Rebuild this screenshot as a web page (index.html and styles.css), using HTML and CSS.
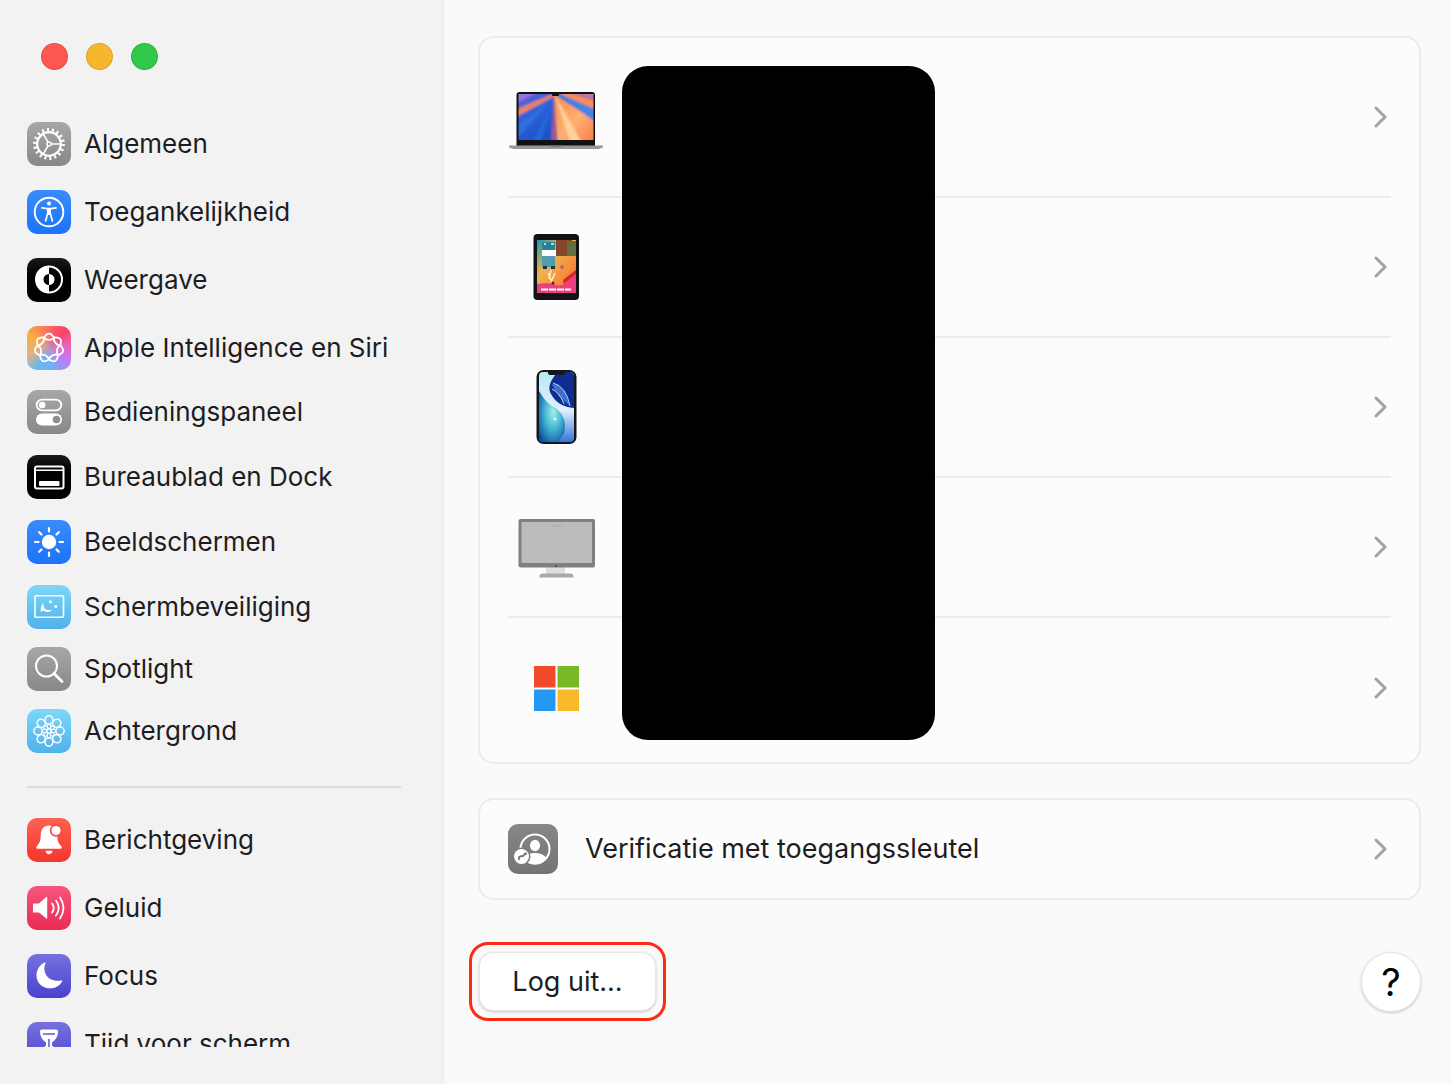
FILE: index.html
```html
<!DOCTYPE html>
<html lang="nl">
<head>
    <meta charset="UTF-8">
    <meta name="viewport" content="width=device-width, initial-scale=1.0">
    <title>Systeeminstellingen</title>
    <link rel="stylesheet" href="styles.css">
</head>
<body>
    <div class="window">
        <aside class="sidebar">
            <div class="window-buttons">
                <button type="button" class="dot close" aria-label="Sluit"></button>
                <button type="button" class="dot minimize" aria-label="Minimaliseer"></button>
                <button type="button" class="dot zoom" aria-label="Vergroot"></button>
            </div>

            <nav class="menu">
                <div class="menu-group wide">
                    <a href="#" class="menu-item">
                        <svg class="icon gray" viewBox="0 0 44 44" fill="none" stroke="#fff">
                            <circle cx="22" cy="22" r="14.2" stroke-width="3.4" stroke-dasharray="2 2.957"/>
                            <circle cx="22" cy="22" r="11.8" stroke-width="2.2"/>
                            <circle cx="22" cy="22" r="2" stroke-width="1.5"/>
                            <path d="M24 22h10M21 20.2l-5-8.6M21 23.8l-5 8.6" stroke-width="1.6"/>
                        </svg>
                        <span>Algemeen</span>
                    </a>
                    <a href="#" class="menu-item">
                        <svg class="icon blue" viewBox="0 0 44 44" fill="none" stroke="#fff">
                            <circle cx="22" cy="22" r="14.3" stroke-width="2"/>
                            <circle cx="22" cy="13.6" r="2" fill="#fff" stroke="none"/>
                            <path d="M15 17.8l5 .9h4l5-.9" stroke-width="1.7" stroke-linecap="round"/>
                            <path d="M20 18h4v7h-4z" fill="#fff" stroke="none"/>
                            <path d="M20.8 23l-2.2 8M23.2 23l2.2 8" stroke-width="1.7" stroke-linecap="round"/>
                        </svg>
                        <span>Toegankelijkheid</span>
                    </a>
                    <a href="#" class="menu-item">
                        <svg class="icon black" viewBox="0 0 44 44">
                            <circle cx="22" cy="21.5" r="13" fill="none" stroke="#fff" stroke-width="2"/>
                            <path d="M22 8.5a13 13 0 0 0 0 26z" fill="#fff"/>
                            <path d="M22 16a5.5 5.5 0 0 0 0 11z" fill="#080808"/>
                            <path d="M22 16a5.5 5.5 0 0 1 0 11z" fill="#fff"/>
                        </svg>
                        <span>Weergave</span>
                    </a>
                    <a href="#" class="menu-item">
                        <svg class="icon siri" viewBox="0 0 44 44" fill="none" stroke="#fff" stroke-width="1.8">
                            <g id="loop">
                                <path d="M17 11.6C19 8.5 20 7.6 22 7.6S25 8.5 27 11.6"/>
                                <path d="M17 11.6C18.5 13.4 20 13.8 22 13.8S25.5 13.4 27 11.6"/>
                            </g>
                            <use href="#loop" transform="rotate(51.43 22 22)"/>
                            <use href="#loop" transform="rotate(102.86 22 22)"/>
                            <use href="#loop" transform="rotate(154.29 22 22)"/>
                            <use href="#loop" transform="rotate(205.71 22 22)"/>
                            <use href="#loop" transform="rotate(257.14 22 22)"/>
                            <use href="#loop" transform="rotate(308.57 22 22)"/>
                        </svg>
                        <span>Apple Intelligence en Siri</span>
                    </a>
                </div>

                <div class="menu-group">
                    <a href="#" class="menu-item">
                        <svg class="icon gray" viewBox="0 0 44 44">
                            <rect x="9.7" y="9.7" width="24.6" height="10.6" rx="5.3" fill="none" stroke="#fff" stroke-width="1.8"/>
                            <circle cx="15.2" cy="15" r="3.3" fill="#fff"/>
                            <rect x="9" y="23.5" width="26" height="12" rx="6" fill="#fff"/>
                            <circle cx="29.5" cy="29.5" r="3.8" fill="#8e8e90"/>
                        </svg>
                        <span>Bedieningspaneel</span>
                    </a>
                    <a href="#" class="menu-item">
                        <svg class="icon black" viewBox="0 0 44 44">
                            <rect x="8" y="11.5" width="28.5" height="22" rx="2" fill="none" stroke="#fff" stroke-width="2"/>
                            <path d="M9 15.2h27" stroke="#fff" stroke-width="1.5"/>
                            <rect x="12" y="26" width="20.5" height="5" rx="1" fill="#fff"/>
                        </svg>
                        <span>Bureaublad en Dock</span>
                    </a>
                    <a href="#" class="menu-item">
                        <svg class="icon blue" viewBox="0 0 44 44">
                            <circle cx="22" cy="22" r="7.2" fill="#fff"/>
                            <path d="M22 8v3.500M22 32.500V36M8 22h3.500M32.500 22H36M12.200 12.200l2.300 2.300M29.500 29.500l2.300 2.300M31.800 12.200l-2.300 2.300M14.500 29.500l-2.300 2.300" stroke="#fff" stroke-width="2.2" stroke-linecap="round"/>
                        </svg>
                        <span>Beeldschermen</span>
                    </a>
                    <a href="#" class="menu-item">
                        <svg class="icon sky" viewBox="0 0 44 44">
                            <rect x="8" y="10.8" width="28.5" height="21.5" rx="1" fill="none" stroke="#fff" stroke-width="1.6"/>
                            <path d="M16.500 18c-.8 5 2.500 8.500 8.500 6.500-3 4-6.500 2.500-8 1l-3.300 1.300c-.2-4 .6-7.200 2.800-8.800z" fill="#fff"/>
                            <circle cx="23.5" cy="16.8" r="1.6" fill="#fff"/>
                            <circle cx="28.8" cy="21.6" r="1.5" fill="#fff"/>
                        </svg>
                        <span>Schermbeveiliging</span>
                    </a>
                </div>

                <div class="menu-group tight">
                    <a href="#" class="menu-item">
                        <svg class="icon gray" viewBox="0 0 44 44" fill="none" stroke="#fff" stroke-linecap="round">
                            <circle cx="19.5" cy="19" r="10.5" stroke-width="2"/>
                            <path d="M27 26.500l8 8" stroke-width="2.8"/>
                        </svg>
                        <span>Spotlight</span>
                    </a>
                    <a href="#" class="menu-item">
                        <svg class="icon sky" viewBox="0 0 44 44" fill="none" stroke="#fff" stroke-width="1.5">
                            <circle cx="22" cy="22" r="2.3"/>
                            <g id="petal">
                                <ellipse cx="22" cy="11" rx="3.9" ry="4.2"/>
                                <ellipse cx="22" cy="17.4" rx="1.7" ry="2.3" stroke-width="1"/>
                            </g>
                            <use href="#petal" transform="rotate(45 22 22)"/>
                            <use href="#petal" transform="rotate(90 22 22)"/>
                            <use href="#petal" transform="rotate(135 22 22)"/>
                            <use href="#petal" transform="rotate(180 22 22)"/>
                            <use href="#petal" transform="rotate(225 22 22)"/>
                            <use href="#petal" transform="rotate(270 22 22)"/>
                            <use href="#petal" transform="rotate(315 22 22)"/>
                        </svg>
                        <span>Achtergrond</span>
                    </a>
                </div>

                <hr class="divider">

                <div class="menu-group wide">
                    <a href="#" class="menu-item">
                        <svg class="icon red" viewBox="0 0 44 44">
                            <path d="M22 7.500c-5.500 0-8 4-8.200 9-.2 6-1 8.500-4.300 12-.7 1-.4 2.300 1 2.300h23c1.400 0 1.700-1.300 1-2.300-3.300-3.500-4.100-6-4.300-12C30 11.500 27.500 7.500 22 7.500z" fill="#fff"/>
                            <path d="M18.500 32.800h7c-.5 2.400-1.800 3.500-3.500 3.500s-3-1.100-3.500-3.500z" fill="#fff"/>
                            <circle cx="29" cy="12.5" r="6.2" fill="#fa4b3f"/>
                            <circle cx="29" cy="12.5" r="4.6" fill="#fff"/>
                        </svg>
                        <span>Berichtgeving</span>
                    </a>
                    <a href="#" class="menu-item">
                        <svg class="icon pink" viewBox="0 0 44 44">
                            <path d="M7 17.500h5l7.300-6.600c.4-.3.9 0 .9.500v20.700c0 .5-.5.800-.9.500L12 26.500H7c-.6 0-1-.4-1-1v-7c0-.6.400-1 1-1z" fill="#fff"/>
                            <path d="M25 17.500q3.500 4.500 0 9M29 14.500q5.500 7.500 0 15M33 11.500q7 10.500 0 21" fill="none" stroke="#fff" stroke-width="1.8" stroke-linecap="round"/>
                        </svg>
                        <span>Geluid</span>
                    </a>
                    <a href="#" class="menu-item">
                        <svg class="icon purple" viewBox="0 0 44 44">
                            <path d="M18.500 9.200c-4 9.500 3 19.300 15.300 17.200 1-.2 1.700.4 1.200 1.400-6.500 11-25.500 7.700-25.500-6.300 0-6 3.500-11 8-13 .8-.3 1.300 0 1 .7z" fill="#fff"/>
                        </svg>
                        <span>Focus</span>
                    </a>
                    <a href="#" class="menu-item">
                        <svg class="icon purple" viewBox="0 0 44 44">
                            <path d="M15 7.500h14c1.300 0 2 .8 2 2 0 5-2.500 8.500-6 11v3c3.500 2.500 6 6 6 11 0 1.200-.7 2-2 2H15c-1.300 0-2-.8-2-2 0-5 2.500-8.500 6-11v-3c-3.500-2.500-6-6-6-11 0-1.200.7-2 2-2z" fill="#fff"/>
                            <path d="M16 12h12M22 17v8" stroke="#5d56d2" stroke-width="1.5"/>
                        </svg>
                        <span>Tijd voor scherm</span>
                    </a>
                </div>
            </nav>
        </aside>

        <main class="content">
            <section class="card devices">
                <a href="#" class="device" aria-label="MacBook">
                    <svg class="device-icon" viewBox="0 -3 96 80">
                        <defs>
                            <linearGradient id="macSky" x1="0" y1="0" x2="1" y2="1">
                                <stop offset="0" stop-color="#7c62d8"/>
                                <stop offset=".35" stop-color="#2c5fd8"/>
                                <stop offset="1" stop-color="#0b3fb4"/>
                            </linearGradient>
                            <linearGradient id="macRay" x1="0" y1="0" x2="1" y2="1">
                                <stop offset="0" stop-color="#ff8a4a"/>
                                <stop offset=".5" stop-color="#ffb070"/>
                                <stop offset="1" stop-color="#f9703f"/>
                            </linearGradient>
                            <filter id="soft"><feGaussianBlur stdDeviation="1.3"/></filter>
                            <clipPath id="macScreen"><rect x="10.5" y="14" width="75" height="46"/></clipPath>
                        </defs>
                        <path d="M8.500 15q0-3 3-3h72.500q3 0 3 3V66h-78.500z" fill="#111"/>
                        <g clip-path="url(#macScreen)">
                            <g filter="url(#soft)">
                                <rect x="4" y="8" width="88" height="58" fill="url(#macSky)"/>
                                <path d="M47 13L4 31v8L49 15z" fill="#f0825a"/>
                                <path d="M44 19L10 57V45z" fill="#2f70e0"/>
                                <path d="M46 18L24 64h8z" fill="#2467dc"/>
                                <path d="M46 15l-3 51h12z" fill="#9c5a90"/>
                                <path d="M46 14l4 52h42V44z" fill="url(#macRay)"/>
                                <path d="M47 15l16 50h12z" fill="#ffd29b"/>
                                <path d="M50 14l42 32V25z" fill="#4a83e2"/>
                                <path d="M48 12l44 19v-9L60 12z" fill="#fb8d55"/>
                                <path d="M4 8h34L4 25z" fill="#9675d8"/>
                                <path d="M62 12h28v9z" fill="#c576a5"/>
                            </g>
                        </g>
                        <rect x="44" y="13" width="7" height="3" rx="1" fill="#111"/>
                        <path d="M1 65.500h94v1.500q-2 2-7 2H8q-5 0-7-2z" fill="#96979b"/>
                        <path d="M41 65.500h14l-2 1.500H43z" fill="#77787b"/>
                    </svg>
                    <svg class="chevron" viewBox="0 0 14 22"><path d="M2 2l9 9-9 9"/></svg>
                </a>
                <a href="#" class="device" aria-label="iPad">
                    <svg class="device-icon" viewBox="0 0 96 80">
                        <defs>
                            <linearGradient id="padBg" x1="0" y1="0" x2="1" y2="1">
                                <stop offset="0" stop-color="#1795a8"/>
                                <stop offset=".35" stop-color="#efb34e"/>
                                <stop offset=".7" stop-color="#f88a3c"/>
                                <stop offset="1" stop-color="#e43b78"/>
                            </linearGradient>
                        </defs>
                        <rect x="25.5" y="7" width="45.5" height="66" rx="4" fill="#111316"/>
                        <rect x="29" y="13" width="39" height="53" fill="url(#padBg)"/>
                        <path d="M29 57q12-2 20 1t19-13v21H29z" fill="#ec3f80"/>
                        <path d="M56 57l12-10v-4L55 53z" fill="#d9222e"/>
                        <rect x="48" y="13" width="16" height="16" fill="#87452c"/>
                        <rect x="59" y="14" width="9" height="15" fill="#60713f"/>
                        <rect x="34" y="15" width="13" height="8" fill="#277f98"/>
                        <rect x="34" y="23" width="14" height="6" fill="#fff"/>
                        <rect x="34" y="29" width="13" height="11" fill="#4f9dae"/>
                        <path d="M35 39h4v3h-4zM43 39h4v3h-4z" fill="#1e3540"/>
                        <path d="M36 17h2M43 17h3M40 46l3 7M43 43l-2 9M47 46l-4 9" stroke="#fff2c8" stroke-width="1.5"/>
                        <circle cx="54" cy="40" r="2" fill="#b66a69"/>
                        <circle cx="45" cy="56" r="1.5" fill="#442c32"/>
                        <path d="M33 62.500h30" stroke="#fff" stroke-width="2" stroke-dasharray="7 1"/>
                    </svg>
                    <svg class="chevron" viewBox="0 0 14 22"><path d="M2 2l9 9-9 9"/></svg>
                </a>
                <a href="#" class="device" aria-label="iPhone">
                    <svg class="device-icon" viewBox="0 0 96 80">
                        <defs>
                            <linearGradient id="phoneBg" x1="0" y1="0" x2="0" y2="1">
                                <stop offset="0" stop-color="#b9e8f2"/>
                                <stop offset=".55" stop-color="#e1efff"/>
                                <stop offset="1" stop-color="#3675d7"/>
                            </linearGradient>
                            <radialGradient id="phoneOrb" cx=".55" cy=".4" r=".7">
                                <stop offset="0" stop-color="#9ff0e0"/>
                                <stop offset=".45" stop-color="#48b8d4"/>
                                <stop offset="1" stop-color="#0649a3"/>
                            </radialGradient>
                            <clipPath id="phoneScreen"><rect x="31" y="5" width="35" height="70" rx="4"/></clipPath>
                        </defs>
                        <rect x="28.5" y="3" width="40" height="74" rx="7" fill="#15171c"/>
                        <g clip-path="url(#phoneScreen)">
                            <rect x="31" y="5" width="35" height="70" fill="url(#phoneBg)"/>
                            <path d="M31 24q8 14 17 17 12 10 8 25l-7 11H31z" fill="url(#phoneOrb)"/>
                            <path d="M48 7q-10 12-5 20 7 13 23 14V5H50z" fill="#102b91"/>
                            <path d="M44 17q13 0 17 21-13-9-17-21z" fill="#3f6fd0"/>
                            <path d="M45 16q13 3 17 23M44 22q8 4 12 15" fill="none" stroke="#b4d4fa" stroke-width="1"/>
                        </g>
                        <path d="M40 4h17v2q0 2-3 2H43q-3 0-3-2z" fill="#15171c"/>
                        <circle cx="47" cy="52" r="1.5" fill="#dcfff2"/>
                    </svg>
                    <svg class="chevron" viewBox="0 0 14 22"><path d="M2 2l9 9-9 9"/></svg>
                </a>
                <a href="#" class="device" aria-label="Beeldscherm">
                    <svg class="device-icon" viewBox="0 0 96 80">
                        <path d="M38 60h19v8H38z" fill="#dedede"/>
                        <path d="M31.500 69.500q0-3 3-3h28q3 0 3 3v1h-34z" fill="#aaa"/>
                        <rect x="10.5" y="12" width="76.500" height="48.5" rx="2" fill="#808080"/>
                        <rect x="13.500" y="15" width="70.500" height="41" fill="#bcbcbc"/>
                        <circle cx="48" cy="59" r="1" fill="#444"/>
                        <path d="M15 18.500h1.500M43 19h11" stroke="#aaa" stroke-width="1"/>
                    </svg>
                    <svg class="chevron" viewBox="0 0 14 22"><path d="M2 2l9 9-9 9"/></svg>
                </a>
                <a href="#" class="device" aria-label="Windows">
                    <svg class="device-icon" viewBox="0 0 96 80">
                        <rect x="26" y="18" width="21.5" height="21.5" fill="#f04a2a"/>
                        <rect x="49.5" y="18" width="21.5" height="21.5" fill="#79b928"/>
                        <rect x="26" y="41.5" width="21.5" height="21.5" fill="#2498f2"/>
                        <rect x="49.5" y="41.5" width="21.5" height="21.5" fill="#f9b928"/>
                    </svg>
                    <svg class="chevron" viewBox="0 0 14 22"><path d="M2 2l9 9-9 9"/></svg>
                </a>
                <div class="redacted"></div>
            </section>

            <a href="#" class="card passkey">
                <svg class="passkey-icon" viewBox="0 0 50 50">
                    <circle cx="27" cy="25" r="14.5" fill="none" stroke="#fff" stroke-width="2"/>
                    <ellipse cx="27" cy="21.5" rx="5" ry="5.8" fill="#fff"/>
                    <path d="M15.500 34q4-5 11.500-5t11.500 5q-4 6.500-11.500 6.500T15.500 34z" fill="#fff"/>
                    <circle cx="13.5" cy="32.5" r="9" fill="#7c7c7c"/>
                    <circle cx="13.5" cy="32.5" r="7.5" fill="#fff"/>
                    <path d="M11 36v-3q2-1 4-1l3-3" fill="none" stroke="#777" stroke-width="1.8"/>
                    <circle cx="17.5" cy="29.8" r="1.3" fill="#777"/>
                </svg>
                <span class="passkey-label">Verificatie met toegangssleutel</span>
                <svg class="chevron" viewBox="0 0 14 22"><path d="M2 2l9 9-9 9"/></svg>
            </a>

            <div class="actions">
                <div class="highlight">
                    <button type="button" class="logout-button">Log uit...</button>
                </div>
                <button type="button" class="help-button">?</button>
            </div>
        </main>
    </div>
</body>
</html>
```
FILE: styles.css
```css
* {
    box-sizing: border-box;
}
body {
    font-family: Inter, "Liberation Sans", sans-serif;
    font-size: 26px;
    line-height: 32px;
    color: #1d1d1f;
    background-color: #fafafa;
    margin: 0;
}
a {
    color: inherit;
    text-decoration: none;
}
button {
    font-family: inherit;
    color: inherit;
    padding: 0;
    cursor: pointer;
}
.window {
    display: flex;
    height: 100vh;
    overflow: hidden;
}
.sidebar {
    display: flex;
    flex-direction: column;
    flex: 0 0 444px;
    padding: 43px 42px 37px 27px;
    background-color: #f2f2f2;
    border-right: 1px solid #ebebeb;
}
.window-buttons {
    display: flex;
    gap: 18px;
    padding-left: 14px;
    margin-bottom: 52px;
}
.dot {
    width: 27px;
    height: 27px;
    border: 1px solid rgba(0, 0, 0, 0.1);
    border-radius: 50%;
}
.close {
    background-color: #fe5751;
}
.minimize {
    background-color: #f8b62f;
}
.zoom {
    background-color: #31c748;
}

/* menu */
.menu {
    flex: 1;
    min-height: 0;
    overflow: hidden;
}
.menu-group {
    display: flex;
    flex-direction: column;
    gap: 21px;
    margin-bottom: 18px;
}
.menu-group.wide {
    gap: 24px;
    margin-bottom: 20px;
}
.menu-group.tight {
    gap: 18px;
    margin-bottom: 0;
}
.menu-item {
    display: flex;
    align-items: center;
    gap: 13px;
    white-space: nowrap;
}
.icon {
    flex: none;
    width: 44px;
    height: 44px;
    border-radius: 10px;
}
.gray {
    background: linear-gradient(#a7a7a9, #88888a);
}
.blue {
    background: linear-gradient(#3a8bfb, #1b74f8);
}
.black {
    background: linear-gradient(#1a1a1a, #000000 40%);
}
.sky {
    background: linear-gradient(#7dd7f8, #50b2ec);
}
.red {
    background: linear-gradient(#fc6254, #f5352d);
}
.pink {
    background: linear-gradient(#f8557c, #e92b56);
}
.purple {
    background: linear-gradient(#7571e0, #4a42cd);
}
.siri {
    background:
        radial-gradient(circle, rgba(190, 150, 190, 0.9), rgba(190, 150, 190, 0) 45%),
        conic-gradient(from 0deg, #fb6b62, #fa4168 12%, #ee63b4 22%, #c279f2 34%, #6fb0f8 48%, #63b9f2 58%, #e3b184 70%, #f8ad42 84%, #fb6b62);
}
.divider {
    height: 2px;
    margin: 33px 0 30px;
    border: none;
    background-color: #dadada;
}

/* right side */
.content {
    flex: 1;
    min-width: 0;
    padding: 36px 30px 0 34px;
}
.card {
    background-color: #fcfcfc;
    border: 2px solid #ececec;
    border-radius: 16px;
}
.devices {
    position: relative;
    padding: 0 28px 4px;
}
.device {
    display: flex;
    align-items: center;
    justify-content: space-between;
    height: 140px;
    border-bottom: 2px solid #ececec;
}
.device:first-child {
    height: 160px;
}
.device:nth-child(5) {
    border-bottom: none;
}
.device-icon {
    width: 96px;
    height: 80px;
}
.chevron {
    flex: none;
    width: 14px;
    height: 22px;
    margin-right: 3px;
    fill: none;
    stroke: #a3a3a3;
    stroke-width: 3;
    stroke-linecap: round;
    stroke-linejoin: round;
}
.redacted {
    position: absolute;
    top: 28px;
    bottom: 22px;
    left: 142px;
    width: 313px;
    border-radius: 26px;
    background-color: #000000;
}
.passkey {
    display: flex;
    align-items: center;
    margin-top: 34px;
    padding: 24px 28px;
}
.passkey-icon {
    width: 50px;
    height: 50px;
    margin-right: 27px;
    border-radius: 10px;
    background: linear-gradient(#878787, #747474);
}
.passkey-label {
    flex: 1;
    font-size: 27px;
}
.actions {
    display: flex;
    align-items: center;
    justify-content: space-between;
    margin-top: 42px;
    margin-left: -9px;
}
.highlight {
    padding: 7px;
    border: 3px solid #fb2c17;
    border-radius: 19px;
}
.logout-button {
    display: block;
    width: 177px;
    height: 59px;
    border: 1px solid #e6e6e6;
    border-radius: 14px;
    background-color: #ffffff;
    box-shadow: 0 1px 3px rgba(0, 0, 0, 0.2);
    font-size: 27px;
}
.help-button {
    width: 60px;
    height: 60px;
    border: 1px solid #e6e6e6;
    border-radius: 50%;
    background-color: #ffffff;
    box-shadow: 0 1px 3px rgba(0, 0, 0, 0.2);
    color: #000000;
    font-size: 38px;
}
```
